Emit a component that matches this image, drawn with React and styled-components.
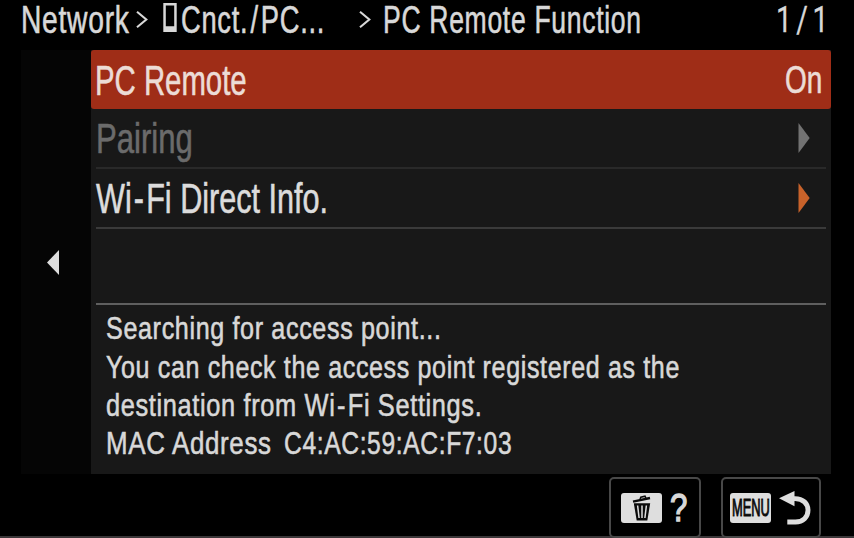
import { useLayoutEffect, useRef, useState } from "react";
import styled, { createGlobalStyle } from "styled-components";

const GlobalStyle = createGlobalStyle`
  * {
    box-sizing: border-box;
  }
  body {
    margin: 0;
    background: #000;
    overflow: hidden;
  }
`;

const Screen = styled.div`
  display: flex;
  flex-direction: column;
  width: 854px;
  height: 538px;
  background: #000;
  color: #d8d8d8;
  font-family: "Liberation Sans", Arial, sans-serif;
`;
const Header = styled.header`
  display: flex;
  align-items: flex-start;
  height: 50px;
  padding-left: 21px;
`;
const Crumb = styled.div`
  display: flex;
  height: 39px;
  margin-left: ${(props) => props.$gap || 0}px;
`;
const PageCount = styled(Crumb)`
  font-family: Roboto, sans-serif;
`;
const ArrowSvg = styled.svg`
  display: block;
  margin-top: 11px;
`;
const PhoneSvg = styled.svg`
  display: block;
  margin-top: 3px;
  margin-right: 4px;
`;
const Body = styled.main`
  display: flex;
  width: 810px;
  height: 424px;
  margin-left: 21px;
`;
const Side = styled.div`
  display: flex;
  justify-content: flex-end;
  align-items: center;
  width: 69.5px;
  padding-right: 31.5px;
  background: #050505;
`;
const Panel = styled.div`
  display: flex;
  flex-direction: column;
  flex: 1;
  background: #181818;
`;
const Row = styled.div`
  display: flex;
  justify-content: space-between;
  align-items: center;
  height: ${(props) => props.$height}px;
  margin: 0 5px;
  padding-right: ${(props) => (props.$selected ? 9 : 16)}px;
  border-bottom: 2px solid ${(props) => props.$line || "transparent"};
  color: ${(props) => (props.$disabled ? "#6b6b6b" : "#dcdcdc")};
  ${(props) =>
    props.$selected &&
    `
    margin: 0;
    padding-left: 4px;
    border: 0;
    border-radius: 3px;
    background: #9f2d17;
    color: #ecdcd6;
  `}
`;
const Spacer = styled.div`
  height: 76px;
  margin: 0 5px;
  border-bottom: 2px solid #5f5f5f;
`;
const Message = styled.div`
  display: flex;
  flex-direction: column;
  padding: 4.4px 0 0 15px;
`;
const Line = styled.div`
  display: flex;
  gap: 12px;
`;
const Footer = styled.footer`
  display: flex;
  align-items: flex-start;
  flex: 1;
  padding: 3px 0 0 609px;
  gap: 20px;
  background: linear-gradient(#000 62px, #3b3739 62px);
`;
const Button = styled.div`
  display: flex;
  align-items: center;
  width: ${(props) => props.$width}px;
  height: 61px;
  padding-left: ${(props) => props.$pad}px;
  border: 2px solid #484848;
  border-radius: 5px;
  background: #000;
`;
const KeyCap = styled.div`
  display: flex;
  justify-content: center;
  align-items: center;
  width: 41px;
  height: 30px;
  margin-right: ${(props) => props.$gap}px;
  border-radius: 3px;
  background: #dedede;
  color: #0a0a0a;
`;
const TextBox = styled.span`
  display: block;
  flex: none;
  width: ${(props) => props.$width}px;
  height: ${(props) => props.$line}px;
`;
const TextInner = styled.span`
  display: inline-block;
  transform-origin: 0 50%;
  font-size: ${(props) => props.$size}px;
  line-height: ${(props) => props.$line}px;
  letter-spacing: ${(props) => props.$spacing || 0}px;
  -webkit-text-stroke: ${(props) => props.$stroke}px currentColor;
  white-space: pre;
`;
// hyphens and slashes stand a little apart from their neighbours
const Loose = styled.span`
  margin: 0 ${(props) => props.$by}px;
`;

// condensed lettering: squeezes the text to the given width
function Narrow({ children, width, size, line, spacing, stroke = 0.6 }) {
  const ref = useRef(null);
  const [scale, setScale] = useState(1);

  useLayoutEffect(() => {
    setScale(width / ref.current.offsetWidth);
  }, [width]);

  return (
    <TextBox $width={width} $line={line}>
      <TextInner
        ref={ref}
        $size={size}
        $line={line}
        $spacing={spacing}
        $stroke={stroke}
        style={{ transform: `scaleX(${scale})` }}
      >
        {children}
      </TextInner>
    </TextBox>
  );
}

function Separator() {
  return (
    <ArrowSvg width="12" height="18" viewBox="0 0 12 18">
      <path d="M1 0.8 L10.3 8.5 L1 16.2" fill="none" stroke="#d8d8d8" strokeWidth="2.1" />
    </ArrowSvg>
  );
}

function Phone() {
  return (
    <PhoneSvg width="14" height="29" viewBox="0 0 14 29">
      <path d="M0.3 0H13.7V29H0.3Z M2.8 2.5V23.3H11.2V2.5Z" fill="#d8d8d8" fillRule="evenodd" />
    </PhoneSvg>
  );
}

function Next({ color }) {
  return (
    <svg width="12" height="30" viewBox="0 0 12 30">
      <path d="M0.5 0L11.7 15L0.5 30Z" fill={color} />
    </svg>
  );
}

function Trash() {
  return (
    <svg width="20" height="26" viewBox="0 0 20 26">
      <path d="M1.8 8.3H18.2L15.3 25.5H4.7Z" fill="#0a0a0a" />
      <path d="M5.6 10.5L7.1 23M10 10.5V23M14.4 10.5L12.9 23" stroke="#dedede" strokeWidth="1.5" />
      <path d="M1 6.6L18 3" stroke="#0a0a0a" strokeWidth="2.4" />
      <path d="M8 4.5L8.8 2.2L13 1.2L14 3.4" fill="none" stroke="#0a0a0a" strokeWidth="1.5" />
    </svg>
  );
}

function Return() {
  return (
    <svg width="32" height="34" viewBox="0 0 32 34">
      <path d="M0 7.3L15.5 0V15.2Z" fill="#dedede" />
      <path d="M14.5 7.6H16C24 7.6 29 12.5 29 19.3C29 26 24 31 16.5 31H8.3" fill="none" stroke="#dedede" strokeWidth="4.9" />
    </svg>
  );
}

const messages = [
  [{ text: "Searching for access point...", width: 335.5 }],
  [{ text: "You can check the access point registered as the", width: 574 }],
  [{ text: <>destination from Wi<Loose $by={2}>-</Loose>Fi Settings.</>, width: 376.5 }],
  [
    { text: "MAC Address", width: 166 },
    { text: "C4:AC:59:AC:F7:03", width: 228.5 },
  ],
];

function App() {
  return (
    <Screen>
      <GlobalStyle />
      <Header>
        <Crumb>
          <Narrow width={108.5} size={38.5} line={39.5} spacing={1}>Network</Narrow>
        </Crumb>
        <Crumb $gap={6.5}>
          <Separator />
        </Crumb>
        <Crumb $gap={15}>
          <Phone />
          <Narrow width={144} size={38.5} line={39.5} spacing={1}>
            Cnct.<Loose $by={3}>/</Loose>PC...
          </Narrow>
        </Crumb>
        <Crumb $gap={34}>
          <Separator />
        </Crumb>
        <Crumb $gap={12}>
          <Narrow width={258.5} size={38.5} line={39.5} spacing={1}>PC Remote Function</Narrow>
        </Crumb>
        <PageCount $gap={134}>
          <Narrow width={57} size={37.5} line={38} spacing={6} stroke={0.3}>1/1</Narrow>
        </PageCount>
      </Header>
      <Body>
        <Side>
          <svg width="12" height="25" viewBox="0 0 12 25">
            <path d="M12 0L0 12.5L12 25Z" fill="#dedede" />
          </svg>
        </Side>
        <Panel>
          <Row $selected $height={59}>
            <Narrow width={151.5} size={43} line={56}>PC Remote</Narrow>
            <Narrow width={37} size={38.5} line={60}>On</Narrow>
          </Row>
          <Row $disabled $height={60} $line="#292929">
            <Narrow width={97} size={43} line={60}>Pairing</Narrow>
            <Next color="#727272" />
          </Row>
          <Row $height={60} $line="#3a3a3a">
            <Narrow width={232} size={43} line={60}>
              Wi<Loose $by={3}>-</Loose>Fi Direct Info.
            </Narrow>
            <Next color="#c8622a" />
          </Row>
          <Spacer />
          <Message>
            {messages.map((parts, index) => (
              <Line key={index}>
                {parts.map((part, partIndex) => (
                  <Narrow key={partIndex} width={part.width} size={31.7} line={38.2} spacing={0.8}>
                    {part.text}
                  </Narrow>
                ))}
              </Line>
            ))}
          </Message>
        </Panel>
      </Body>
      <Footer>
        <Button $width={92} $pad={10}>
          <KeyCap $gap={8}>
            <Trash />
          </KeyCap>
          <Narrow width={17} size={38.5} line={42} stroke={1.4}>?</Narrow>
        </Button>
        <Button $width={100} $pad={7}>
          <KeyCap $gap={8}>
            <Narrow width={38} size={24} line={30} stroke={1}>MENU</Narrow>
          </KeyCap>
          <Return />
        </Button>
      </Footer>
    </Screen>
  );
}

export default App;
